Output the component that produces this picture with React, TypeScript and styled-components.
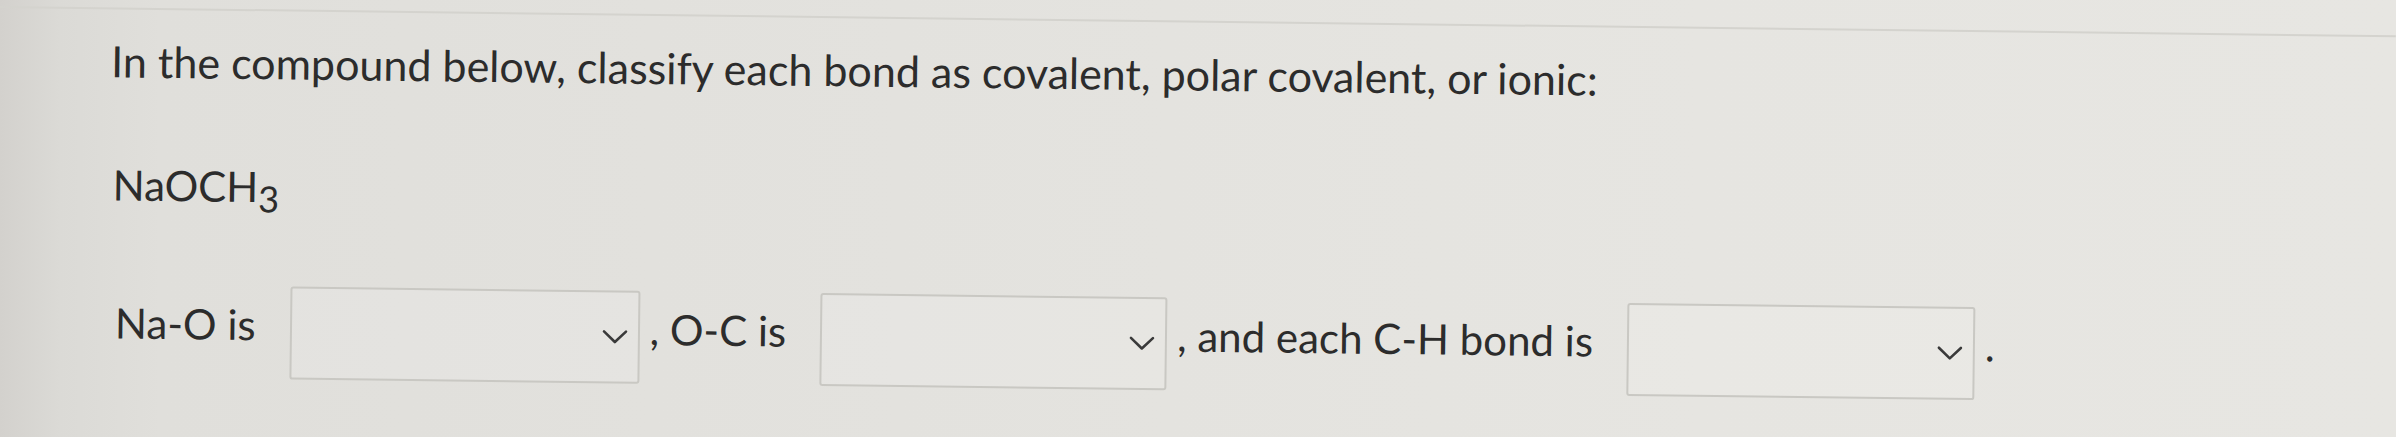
import React from "react";
import styled, { createGlobalStyle } from "styled-components";

const GlobalStyle = createGlobalStyle`
  html, body {
    margin: 0;
    padding: 0;
    height: 437px;
    overflow: hidden;
  }
  body {
    background: linear-gradient(
      90deg,
      #d3d1cd 0px,
      #dbdad6 60px,
      #e0dfdb 160px,
      #e3e2de 900px,
      #e6e5e1 1700px,
      #e7e6e2 2396px
    );
    font-family: "Lato", "Open Sans", sans-serif;
    color: #2c2c2c;
  }
`;

const Frame = styled.div`
  width: 2396px;
  transform: rotate(0.7deg);
  transform-origin: 0 0;
`;

const TopStrip = styled.div`
  height: 6px;
  border-bottom: 2px solid #d4d3ce;
`;

const Content = styled.div`
  padding: 27px 0 0 112px;
`;

const Prompt = styled.p`
  margin: 0;
  font-size: 43px;
  line-height: 50px;
  white-space: nowrap;
`;

const Formula = styled.p`
  margin: 73px 0 0 3px;
  font-size: 42px;
  line-height: 50px;
`;

const Sub = styled.sub`
  font-size: 0.86em;
  line-height: 0;
  vertical-align: -10px;
`;

const Row = styled.div`
  margin-top: 75px;
  margin-left: 7px;
  display: flex;
  align-items: center;
  font-size: 42px;
  line-height: 50px;
  white-space: nowrap;
`;

const Phrase = styled.span`
  padding-bottom: 17px;
`;

const Select = styled.div<{ $w: number }>`
  box-sizing: border-box;
  width: ${(p) => p.$w}px;
  height: 93px;
  margin: 0 10px 0 34px;
  border: 2px solid #c9c8c3;
  border-radius: 3px;
  background: rgba(255, 255, 255, 0.12);
  display: flex;
  align-items: center;
  justify-content: flex-end;
  padding-right: 10px;
`;

const Chevron = () => (
  <svg width="26" height="15" viewBox="0 0 26 15" aria-hidden="true">
    <path
      d="M2 2 L13 12.5 L24 2"
      fill="none"
      stroke="#3a3a3a"
      strokeWidth="2.6"
      strokeLinecap="round"
      strokeLinejoin="round"
    />
  </svg>
);

export default function App() {
  return (
    <>
      <GlobalStyle />
      <Frame>
        <TopStrip />
        <Content>
          <Prompt>
            In the compound below, classify each bond as covalent, polar covalent, or ionic:
          </Prompt>
          <Formula>
            NaOCH<Sub>3</Sub>
          </Formula>
          <Row>
            <Phrase>Na-O is</Phrase>
            <Select $w={350}>
              <Chevron />
            </Select>
            <Phrase>, O-C is</Phrase>
            <Select $w={347}>
              <Chevron />
            </Select>
            <Phrase>, and each C-H bond is</Phrase>
            <Select $w={348}>
              <Chevron />
            </Select>
            <Phrase>.</Phrase>
          </Row>
        </Content>
      </Frame>
    </>
  );
}
